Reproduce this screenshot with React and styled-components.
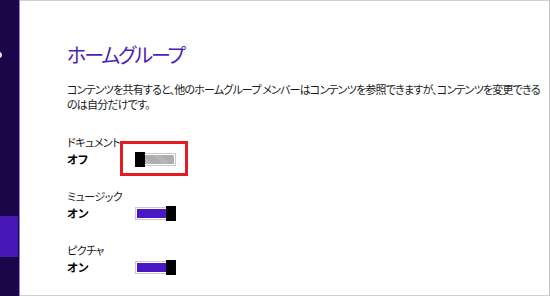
import React from "react";
import styled, { createGlobalStyle } from "styled-components";

const GlobalStyle = createGlobalStyle`
  html, body {
    margin: 0;
    padding: 0;
    background: #ffffff;
  }
  body {
    font-family: "Noto Sans CJK JP", "Noto Sans", sans-serif;
  }
`;

const Screen = styled.div`
  width: 550px;
  height: 296px;
  display: flex;
  box-sizing: border-box;
  overflow: hidden;
`;

const Sidebar = styled.div`
  width: 19px;
  flex-shrink: 0;
  background: #1a0648;
  border-right: 1px solid #8f86c4;
  position: relative;
  display: flex;
  flex-direction: column;
`;

const BackDot = styled.div`
  position: absolute;
  left: -4px;
  top: 52px;
  width: 6px;
  height: 6px;
  border-radius: 50%;
  background: #e8e4f4;
`;

const SideItem = styled.div`
  margin-top: 216px;
  height: 41px;
  width: 18px;
  background: #4718b6;
`;

const Main = styled.div`
  flex: 1;
  border-top: 1px solid #cfcfcf;
  border-right: 1px solid #c4c4c4;
  border-bottom: 1px solid #cfcfcf;
  padding: 37px 0 0 47px;
  box-sizing: border-box;
  display: flex;
  flex-direction: column;
`;

const Title = styled.h1`
  margin: 0;
  font-size: 20px;
  font-weight: 400;
  line-height: 34px;
  color: #4c1fb8;
  font-feature-settings: "palt";
  letter-spacing: -2px;
`;

const Description = styled.p`
  margin: 10px 0 0 0;
  font-size: 11px;
  line-height: 15px;
  color: #1a1a1a;
  white-space: nowrap;
  font-feature-settings: "palt";
  letter-spacing: -0.8px;
`;

const Setting = styled.div`
  margin-top: ${({ $gap }) => $gap}px;
  display: flex;
  flex-direction: column;
`;

const Label = styled.div`
  font-size: 11px;
  line-height: 14px;
  color: #1a1a1a;
  font-feature-settings: "palt";
  letter-spacing: -0.5px;
`;

const StateRow = styled.div`
  display: flex;
  align-items: center;
  margin-top: 3px;
`;

const StateText = styled.div`
  width: 68px;
  font-size: 11.5px;
  font-weight: 700;
  line-height: 15px;
  color: #000;
  font-feature-settings: "palt";
`;

const ToggleWrap = styled.div`
  position: relative;
  width: 41px;
  height: 15px;

  ${({ $marked }) =>
    $marked &&
    `
    &::after {
      content: "";
      position: absolute;
      left: -15px;
      top: -11px;
      width: 62px;
      height: 29px;
      border: 3px solid #e31b23;
    }
  `}
`;

const Track = styled.div`
  position: absolute;
  left: 0;
  top: 1px;
  width: 41px;
  height: 13px;
  box-sizing: border-box;
  border: 1px solid #c9c9c9;
  padding: 1px;
  background: #fff;
`;

const TrackFill = styled.div`
  width: 100%;
  height: 100%;
  background: ${({ $on }) =>
    $on
      ? "#4a17c4"
      : "repeating-linear-gradient(45deg, #a6a6a6 0 1px, #bdbdbd 1px 2px)"};
`;

const Thumb = styled.div`
  position: absolute;
  top: 0;
  ${({ $on }) => ($on ? "right: 0;" : "left: 0;")}
  width: 10px;
  height: 15px;
  background: #000;
`;

const Toggle = ({ on, marked }) => (
  <ToggleWrap $marked={marked}>
    <Track>
      <TrackFill $on={on} />
    </Track>
    <Thumb $on={on} />
  </ToggleWrap>
);

const settings = [
  { label: "ドキュメント", on: false, gap: 23, marked: true },
  { label: "ミュージック", on: true, gap: 22 },
  { label: "ピクチャ", on: true, gap: 22 },
];

export default function App() {
  return (
    <>
      <GlobalStyle />
      <Screen>
        <Sidebar>
          <BackDot />
          <SideItem />
        </Sidebar>
        <Main>
          <Title>ホームグループ</Title>
          <Description>
            コンテンツを共有すると、他のホームグループ メンバーはコンテンツを参照できますが、コンテンツを変更できる
            <br />
            のは自分だけです。
          </Description>
          {settings.map((s) => (
            <Setting key={s.label} $gap={s.gap}>
              <Label>{s.label}</Label>
              <StateRow>
                <StateText>{s.on ? "オン" : "オフ"}</StateText>
                <Toggle on={s.on} marked={s.marked} />
              </StateRow>
            </Setting>
          ))}
        </Main>
      </Screen>
    </>
  );
}
